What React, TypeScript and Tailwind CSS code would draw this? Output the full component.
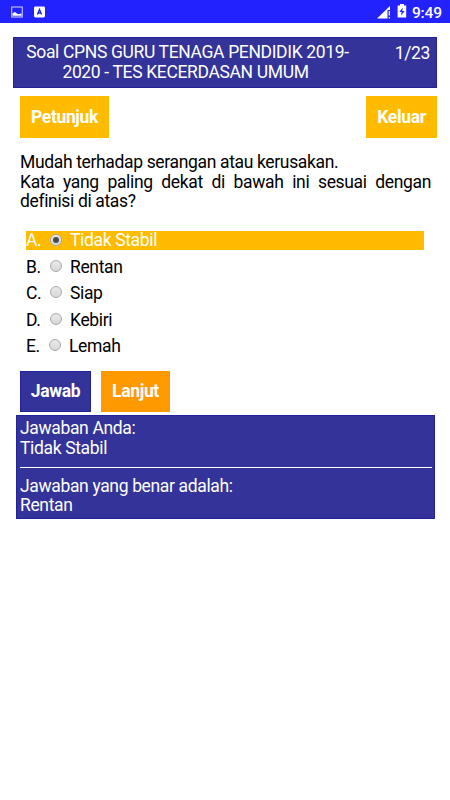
import React from "react";

const options = [
  { letter: "A.", label: "Tidak Stabil", row: "mt-[19px] h-[19px] bg-[#ffbb00] text-white", checked: true },
  { letter: "B.", label: "Rentan", row: "mt-[7px] h-[20px]", checked: false },
  { letter: "C.", label: "Siap", row: "mt-[6px] h-[20px]", checked: false },
  { letter: "D.", label: "Kebiri", row: "mt-[7px] h-[20px]", checked: false },
  { letter: "E.", label: "Lemah", row: "mt-[6px] h-[20px]", checked: false },
];

function Radio({ checked }: { checked: boolean }) {
  return (
    <span className="mb-px flex h-[12px] w-[12px] shrink-0 items-center justify-center rounded-full border border-[#aaaaaa] bg-linear-to-b from-[#e9e9e9] to-[#d8d8d8]">
      {checked && <span className="h-[6px] w-[6px] rounded-full bg-[#4a4a4a]" />}
    </span>
  );
}

function StatusBar() {
  return (
    <header className="flex h-[23px] items-center bg-[#2222ff] text-white">
      <svg className="ml-[11px] mt-px h-[12px] w-[12px]" viewBox="0 0 12 12">
        <rect x="0.7" y="1" width="10.6" height="10" fill="none" stroke="#b9b9ff" strokeWidth="1.2" />
        <path d="M1.5 9.7V7.2L4 6l3 2.2 3.5-.8v2.3z" fill="#fff" />
      </svg>
      <svg className="ml-[11px] mt-px h-[12px] w-[11px]" viewBox="0 0 11 12">
        <rect x="0" y="0.5" width="11" height="11" rx="1.4" fill="#fff" />
        <path d="M3.4 8.5l2.1-5 2.1 5M4.2 7h2.6" fill="none" stroke="#2222dd" strokeWidth="1.3" />
      </svg>
      <svg className="ml-auto mt-px h-[13px] w-[14px]" viewBox="0 0 14 13">
        <path d="M0 12.5L13 0v4h-2.5v8.5z" fill="#fff" />
        <path d="M12.3 5v4.5M12.3 11v1.5" stroke="#fff" strokeWidth="1.2" />
      </svg>
      <svg className="ml-[6px] mb-px h-[14px] w-[10px]" viewBox="0 0 10 14">
        <path d="M3 0h4v1.5h2.2v12H.6v-12H3z" fill="#fff" />
        <path d="M5.8 3.5L2.4 8h2.2l-.5 3.5L7.6 7H5.2z" fill="#2222ff" />
      </svg>
      <span className="ml-[5px] mr-[8px] mt-[2px] text-[15.5px] leading-[18px] font-medium tracking-[-0.1px]">9:49</span>
    </header>
  );
}

export default function App() {
  return (
    <main className="h-[800px] w-[450px] overflow-hidden bg-white font-['Roboto',sans-serif] text-[17.5px] leading-[19.5px] tracking-[-0.35px] text-black">
      <StatusBar />
      <div className="ml-[13px] mt-[14px] flex h-[51px] w-[424px] border border-[#22229a] bg-[#333399] pt-[5px] text-white">
        <h1 className="ml-[5px] w-[337px] shrink-0 text-center whitespace-nowrap">
          Soal CPNS GURU TENAGA PENDIDIK 2019-
          <br />
          <span className="mr-[4px]">2020 - TES KECERDASAN UMUM</span>
        </h1>
        <span className="ml-auto mr-[6px] mt-px">1/23</span>
      </div>
      <div className="mt-[8px] flex justify-between pl-[20px] pr-[13px]">
        <button className="h-[42px] w-[89px] bg-[#ffbb00] pt-[2px] font-bold text-white">Petunjuk</button>
        <button className="h-[42px] w-[71px] bg-[#ffbb00] pt-[2px] font-bold text-white">Keluar</button>
      </div>
      <p className="ml-[20px] mt-[15px] w-[411px] text-justify">
        Mudah terhadap serangan atau kerusakan.
        <br />
        Kata yang paling dekat di bawah ini sesuai dengan definisi di atas?
      </p>
      <div className="ml-[26px] w-[398px]">
        {options.map((o) => (
          <label key={o.letter} className={`flex items-center ${o.row}`}>
            <span className={o.letter === "E." ? "w-[23px] pt-[2px]" : "w-[24px] pt-[2px]"}>{o.letter}</span>
            <Radio checked={o.checked} />
            <span className="ml-[8px] pt-[2px]">{o.label}</span>
          </label>
        ))}
      </div>
      <div className="ml-[20px] mt-[15px] flex gap-[10px]">
        <button className="h-[41px] w-[71px] border border-[#22229a] bg-[#333399] pt-[2px] font-bold text-white">Jawab</button>
        <button className="h-[41px] w-[69px] bg-[#ff9900] pt-[2px] font-bold text-white">Lanjut</button>
      </div>
      <section className="ml-[16px] mt-[3px] h-[104px] w-[419px] border border-[#22229a] bg-[#333399] px-[3px] pt-[3.5px] text-white">
        <p>Jawaban Anda:</p>
        <p>Tidak Stabil</p>
        <hr className="mt-[8.5px] mb-[9px] w-[412px] border-white" />
        <p>Jawaban yang benar adalah:</p>
        <p>Rentan</p>
      </section>
    </main>
  );
}
